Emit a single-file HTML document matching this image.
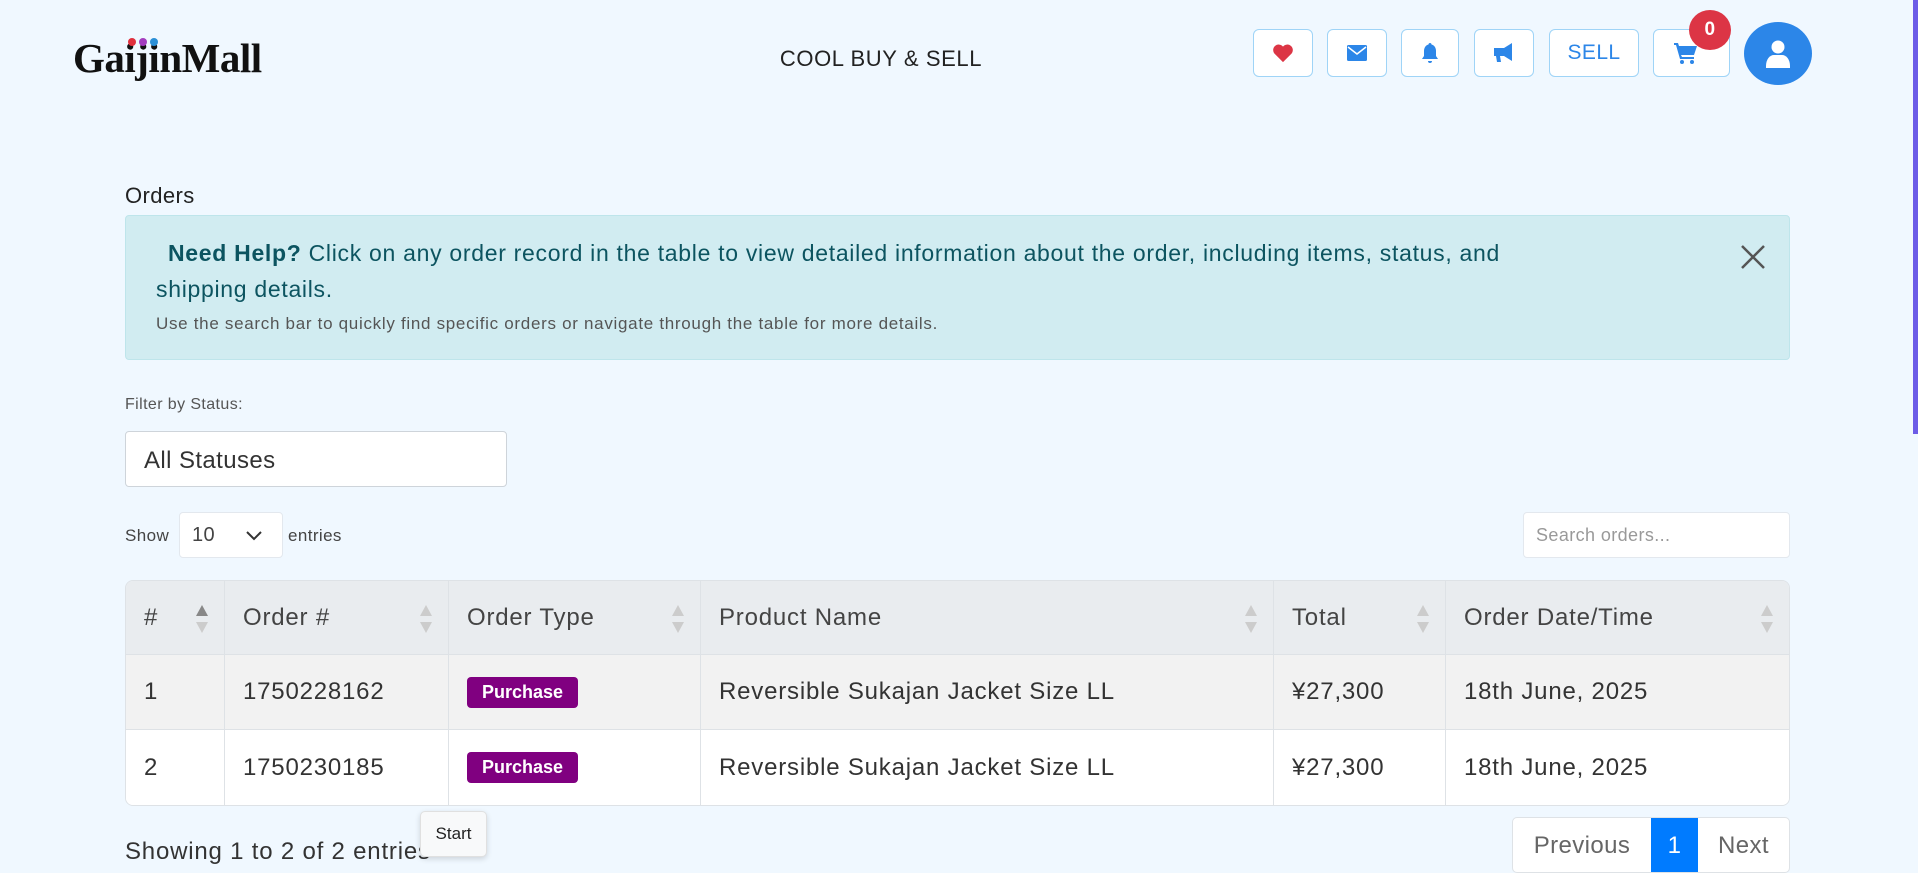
<!DOCTYPE html>
<html><head><meta charset="utf-8"><style>
*{box-sizing:border-box;margin:0;padding:0}
body{width:1918px;height:871px;overflow:hidden;background:#f0f8ff;font-family:"Liberation Sans",sans-serif;color:#212529;position:relative;letter-spacing:.4px}
.abs{position:absolute}
.logo{left:73px;top:34px;font-family:"Liberation Serif",serif;font-weight:bold;font-size:41px;color:#111;letter-spacing:-0.5px}
.dot{position:absolute;width:8px;height:8px;border-radius:50%;top:40px}
.title{left:0;width:1762px;text-align:center;top:46px;font-size:22px;color:#222;letter-spacing:.6px}
.btn{position:absolute;top:29px;height:48px;background:#fff;border:1px solid #9fd4f7;border-radius:6px;display:flex;align-items:center;justify-content:center;color:#2c86e8}
.badge{left:1689px;top:10px;width:42px;height:40px;border-radius:50%;background:#dc3545;color:#fff;font-weight:bold;font-size:19px;display:flex;align-items:center;justify-content:center}
.avatar{left:1744px;top:22px;width:68px;height:63px;border-radius:50%;background:#2c86e8;display:flex;align-items:center;justify-content:center}
.scroll{left:1913px;top:0;width:5px;height:434px;background:#6c5ce7}
.alert{left:125px;top:215px;width:1665px;height:145px;background:#d1ecf1;border:1px solid #bee5eb;border-radius:4px;color:#0c5460}
table{position:absolute;left:125px;top:580px;width:1665px;border-collapse:separate;border-spacing:0;border:1px solid #dee2e6;border-radius:8px;overflow:hidden;font-size:24px;letter-spacing:.8px}
th,td{border-right:1px solid #dee2e6;border-bottom:1px solid #dee2e6;text-align:left;padding:0 18px;position:relative}
th{height:74px;background:#e9ecef;font-weight:normal;color:#444}
td{height:75px;color:#333}
tr:last-child td{border-bottom:none}
th:last-child,td:last-child{border-right:none}
.r1 td{background:#f2f2f2}.r2 td{background:#fff}
.pb{display:inline-block;background:#800080;color:#fff;font-weight:bold;font-size:18px;padding:5px 15px;border-radius:4px;letter-spacing:0}
.sort{position:absolute;right:16px;top:24px;width:12px;height:28px}
.sort:before{content:"";position:absolute;left:0;top:0;border:6px solid transparent;border-bottom:11px solid #ccc;border-top:0}
.sort:after{content:"";position:absolute;left:0;bottom:0;border:6px solid transparent;border-top:11px solid #ccc;border-bottom:0}
.sort.a:before{border-bottom-color:#888}
</style></head><body>
<div class="abs logo">GaijinMall</div>
<div class="dot" style="left:128px;top:38px;background:#e0303d"></div>
<div class="dot" style="left:139px;top:38px;background:#a33dbf"></div>
<div class="dot" style="left:150px;top:38px;background:#2b8fd6"></div>
<div class="abs title">COOL BUY &amp; SELL</div>

<div class="btn" style="left:1253px;width:60px"><svg width="22" height="20" viewBox="0 0 24 22"><path d="M12 21 2.5 11.5A5.5 5.5 0 0 1 12 4a5.5 5.5 0 0 1 9.5 7.5Z" fill="#dc3545"/></svg></div>
<div class="btn" style="left:1327px;width:60px"><svg width="20" height="16" viewBox="0 0 20 16"><rect width="20" height="16" rx="1.5" fill="#2c86e8"/><path d="M1 2l9 7 9-7" stroke="#fff" stroke-width="1.5" fill="none"/></svg></div>
<div class="btn" style="left:1401px;width:58px"><svg width="18" height="22" viewBox="0 0 18 22"><path d="M9 1c1 0 1.5.7 1.5 1.5C13.5 3.3 15 6 15 9v5l2 3H1l2-3V9c0-3 1.5-5.7 4.5-6.5C7.5 1.7 8 1 9 1z M7 19h4a2 2 0 0 1-4 0z" fill="#2c86e8"/></svg></div>
<div class="btn" style="left:1474px;width:60px"><svg width="24" height="22" viewBox="0 0 24 22"><path d="M20 1v18l-8-5H8l1 6H5L4 14H2V6h10l8-5z" fill="#2c86e8"/></svg></div>
<div class="btn" style="left:1549px;width:90px;font-size:21px">SELL</div>
<div class="btn" style="left:1653px;width:77px;justify-content:flex-start;padding-left:20px"><svg width="24" height="22" viewBox="0 0 24 22"><path d="M0 1h4l1 3h18l-3 9H7l1 2h12v2H6L2 3H0z" fill="#2c86e8"/><circle cx="8" cy="20" r="2" fill="#2c86e8"/><circle cx="18" cy="20" r="2" fill="#2c86e8"/></svg></div>
<div class="abs badge">0</div>
<div class="abs avatar"><svg width="24" height="28" viewBox="0 0 24 28"><circle cx="12" cy="7" r="6.5" fill="#fff"/><path d="M0 26c0-7 4-11 8-11h8c4 0 8 4 8 11v2H0z" fill="#fff"/></svg></div>
<div class="abs scroll"></div>

<div class="abs" style="left:125px;top:183px;font-size:22px;color:#222">Orders</div>
<div class="abs alert">
 <div class="abs" style="left:30px;top:19px;width:1600px;font-size:23px;line-height:36px;color:#0c5460;letter-spacing:.7px"><b style="padding-left:12px;font-weight:bold">Need Help?</b> Click on any order record in the table to view detailed information about the order, including items, status, and<br>shipping details.</div>
 <div class="abs" style="left:30px;top:98px;font-size:17px;color:#555;letter-spacing:.7px">Use the search bar to quickly find specific orders or navigate through the table for more details.</div>
 <div class="abs" style="left:1613px;top:27px"><svg width="28" height="28" viewBox="0 0 28 28"><path d="M3 3l22 22M25 3 3 25" stroke="#555" stroke-width="2.5"/></svg></div>
</div>

<div class="abs" style="left:125px;top:396px;font-size:16px;color:#555">Filter by Status:</div>
<div class="abs" style="left:125px;top:431px;width:382px;height:56px;background:#fff;border:1px solid #ced4da;border-radius:4px;font-size:24px;padding:15px 18px;color:#333">All Statuses</div>

<div class="abs" style="left:125px;top:526px;font-size:17px;color:#444">Show</div>
<div class="abs" style="left:179px;top:512px;width:104px;height:46px;background:#fff;border:1px solid #e3e8ee;border-radius:4px;font-size:20px;padding:11px 12px;color:#444">10<svg style="position:absolute;right:20px;top:18px" width="16" height="10" viewBox="0 0 16 10"><path d="M1 1l7 7 7-7" stroke="#333" stroke-width="2" fill="none"/></svg></div>
<div class="abs" style="left:288px;top:526px;font-size:17px;color:#444">entries</div>
<div class="abs" style="left:1523px;top:512px;width:267px;height:46px;background:#fff;border:1px solid #e3e8ee;border-radius:4px;font-size:18px;padding:12px 12px;color:#999">Search orders...</div>

<table>
<tr><th style="width:99px">#<span class="sort a"></span></th><th style="width:224px">Order #<span class="sort"></span></th><th style="width:252px">Order Type<span class="sort"></span></th><th style="width:573px">Product Name<span class="sort"></span></th><th style="width:172px">Total<span class="sort"></span></th><th>Order Date/Time<span class="sort"></span></th></tr>
<tr class="r1"><td>1</td><td>1750228162</td><td><span class="pb">Purchase</span></td><td>Reversible Sukajan Jacket Size LL</td><td>¥27,300</td><td>18th June, 2025</td></tr>
<tr class="r2"><td>2</td><td>1750230185</td><td><span class="pb">Purchase</span></td><td>Reversible Sukajan Jacket Size LL</td><td>¥27,300</td><td>18th June, 2025</td></tr>
</table>

<div class="abs" style="left:125px;top:838px;font-size:24px;color:#333;letter-spacing:.8px">Showing 1 to 2 of 2 entries</div>
<div class="abs" style="left:420px;top:811px;width:67px;height:46px;background:#f8f9fa;border:1px solid #e0e0e0;border-radius:5px;box-shadow:0 2px 6px rgba(0,0,0,.15);font-size:17px;padding:12px 0;text-align:center;color:#222;letter-spacing:0">Start</div>

<div class="abs" style="left:1512px;top:817px;width:278px;height:56px;border:1px solid #dee2e6;border-radius:5px;background:#fff;display:flex;font-size:24px;color:#666">
 <div style="width:138px;text-align:center;padding-top:14px">Previous</div>
 <div style="width:47px;text-align:center;padding-top:14px;background:#007bff;color:#fff">1</div>
 <div style="flex:1;text-align:center;padding-top:14px">Next</div>
</div>
</body></html>
